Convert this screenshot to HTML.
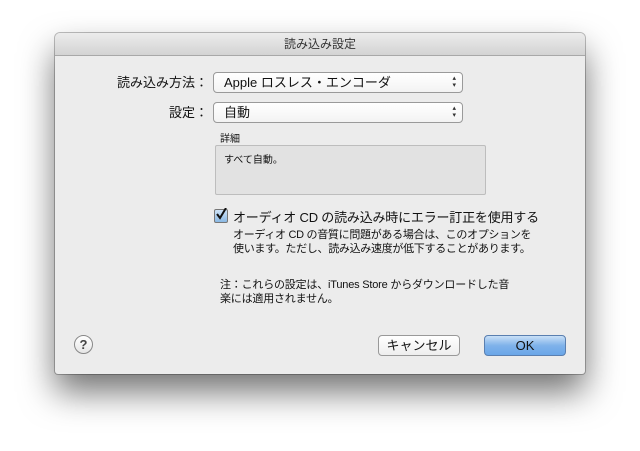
<!DOCTYPE html>
<html><head><meta charset="utf-8"><style>
body{margin:0;width:640px;height:451px;background:#fff;position:relative;overflow:hidden;font-family:"Liberation Sans","Noto Sans CJK JP",sans-serif;color:#111}
.win{position:absolute;left:55px;top:33px;width:530px;height:341px;background:#ececec;border-radius:5px 5px 3px 3px;box-shadow:0 18px 34px rgba(0,0,0,.55),0 0 0 1px rgba(0,0,0,.25)}
.title{height:22px;background:linear-gradient(#ececec,#d3d3d3);border-bottom:1px solid #a8a8a8;border-radius:5px 5px 0 0;text-align:center;font-size:12px;line-height:22px;color:#333}
.a{position:absolute;white-space:nowrap}
.pop{position:absolute;left:158px;height:19px;background:linear-gradient(#fff,#f3f3f3);border:1px solid #9a9a9a;border-radius:4px;font-size:13px;line-height:19px;padding-left:10px;box-sizing:content-box;width:238px}
.pop:after{content:"▴\A▾";white-space:pre;position:absolute;right:6px;top:2px;font-size:7px;line-height:7px;color:#333}
.lbl{font-size:13px;text-align:right;width:150px;left:3px}
.btn{position:absolute;top:302px;height:19px;border-radius:4px;font-size:13px;line-height:19px;text-align:center}
</style></head><body>
<div class="win">
<div class="title">読み込み設定</div>
<div class="a lbl" style="top:39px">読み込み方法：</div>
<div class="pop" style="top:39px">Apple ロスレス・エンコーダ</div>
<div class="a lbl" style="top:69px">設定：</div>
<div class="pop" style="top:69px">自動</div>
<div class="a" style="left:165px;top:97px;font-size:10px">詳細</div>
<div class="a" style="left:160px;top:112px;width:271px;height:50px;background:#e2e2e2;border:1px solid #bdbdbd;border-radius:2px;font-size:10px;padding:5px 0 0 8px;box-sizing:border-box">すべて自動。</div>
<div class="a" style="left:159px;top:176px;width:12px;height:12px;border:1px solid #777;border-radius:2px;background:linear-gradient(#cfe3f7,#8ab8e4)"><svg width="12" height="12" style="position:absolute;left:0;top:-2px"><path d="M2 6 L5 10 L11 0" stroke="#111" stroke-width="2" fill="none"/></svg></div>
<div class="a" style="left:178px;top:174px;font-size:13px;letter-spacing:-0.2px">オーディオ CD の読み込み時にエラー訂正を使用する</div>
<div class="a" style="left:178px;top:195px;font-size:11px;line-height:14px;letter-spacing:-0.3px">オーディオ CD の音質に問題がある場合は、このオプションを<br>使います。ただし、読み込み速度が低下することがあります。</div>
<div class="a" style="left:165px;top:245px;font-size:11px;line-height:14px;letter-spacing:-0.2px">注：これらの設定は、iTunes Store からダウンロードした音<br>楽には適用されません。</div>
<div class="a" style="left:19px;top:302px;width:17px;height:17px;border:1px solid #888;border-radius:50%;background:linear-gradient(#fff,#e6e6e6);text-align:center;font-size:13px;line-height:17px;font-weight:bold;color:#444">?</div>
<div class="btn" style="left:323px;width:80px;border:1px solid #999;background:linear-gradient(#fff,#eee)">キャンセル</div>
<div class="btn" style="left:429px;width:80px;border:1px solid #5a7fb0;background:linear-gradient(#c9e0f7,#7fb2ea 50%,#6aa6e8)">OK</div>
</div>
</body></html>
